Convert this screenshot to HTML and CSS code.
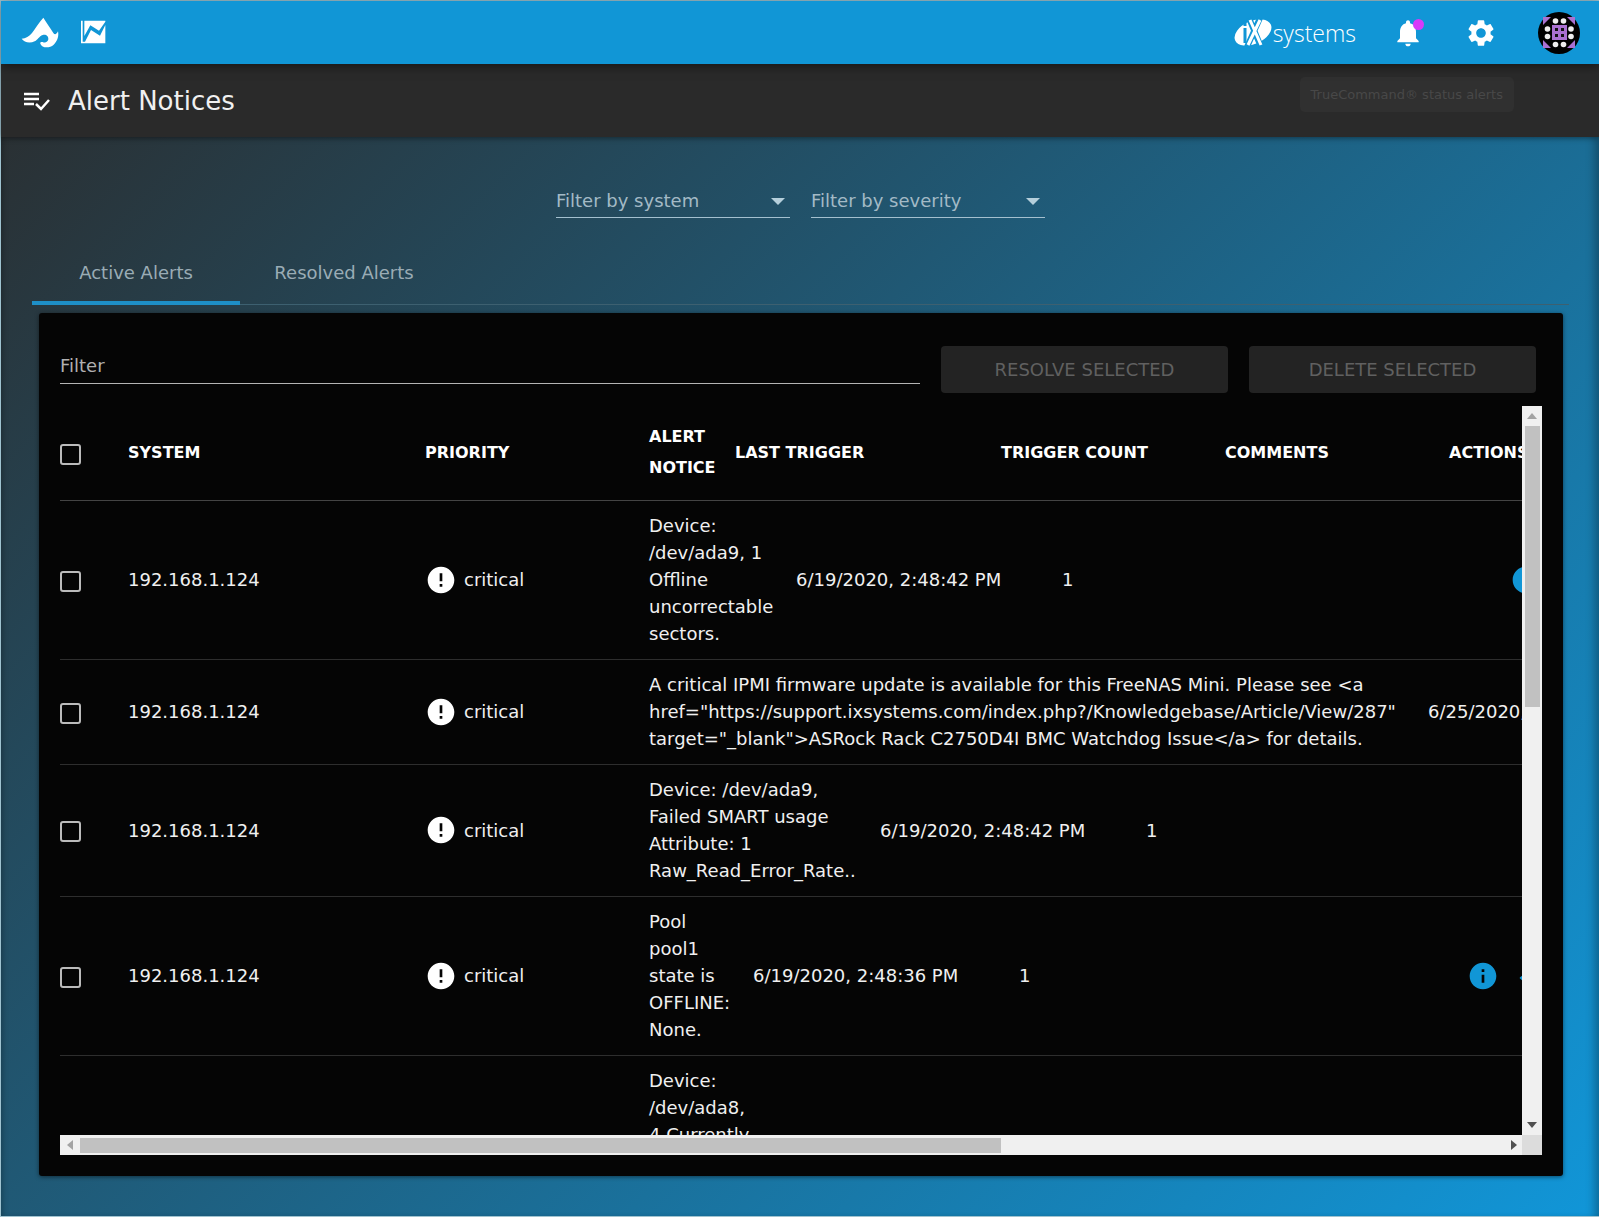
FILE: index.html
```html
<!DOCTYPE html>
<html lang="en">
<head>
<meta charset="utf-8">
<title>Alert Notices</title>
<link rel="stylesheet" href="styles.css">
</head>
<body>
<svg class="defs" aria-hidden="true">
  <symbol id="i-error" viewBox="0 0 24 24"><path d="M12 2C6.480 2 2 6.480 2 12s4.480 10 10 10 10-4.480 10-10S17.520 2 12 2zm1 15h-2v-2h2v2zm0-4h-2V7h2v6z"/></symbol>
  <symbol id="i-info" viewBox="0 0 24 24"><path d="M12 2C6.480 2 2 6.480 2 12s4.480 10 10 10 10-4.480 10-10S17.520 2 12 2zm1 15h-2v-6h2v6zm0-8h-2V7h2v2z"/></symbol>
  <symbol id="i-check" viewBox="0 0 24 24"><path d="M9 16.170L4.830 12l-1.420 1.410L9 19 21 7l-1.410-1.410z"/></symbol>
</svg>
<div class="app">
  <header class="topbar">
    <a class="brand" href="#" aria-label="Home">
      <svg width="38" height="32" viewBox="0 0 114 96"><path fill="#fff" d="M67 2 C54 17 43 34 33 48 C25 58 14 65 2 65 C9 76 26 80 41 73 C51 68 54 58 65 54 C75 51 83 58 82 67 C81 75 72 79 65 75 C59 74 57 76 58 80 C62 93 85 95 98 83 C110 72 114 57 111 43 C107 51 102 55 97 48 C89 34 77 18 67 2z"/></svg>
    </a>
    <a class="brand" href="#" aria-label="Dashboard">
      <svg width="25" height="26" viewBox="0 0 75 78"><path fill="#fff" d="M0 2h5v63h68v5H0zM10 2h63v3L54 32 28 16 10 48zM73 15v50H12l18-35 27 17z"/></svg>
    </a>
    <span class="spacer"></span>
    <a class="ix" href="#" aria-label="iXsystems">
      <svg width="38" height="32" viewBox="0 0 38 32">
        <ellipse cx="19" cy="15.500" rx="19.500" ry="11.500" transform="rotate(-24 19 15.500)" fill="#fff"/>
        <g fill="none" stroke="#1196d6" stroke-width="6"><path d="M15 1l12 29M26 1L13 30"/></g>
        <g fill="none" stroke="#fff" stroke-width="3"><path d="M16 3l11 25M26 3L14 28"/></g>
        <path fill="none" stroke="#1196d6" stroke-width="3" d="M11 11v15M11 6v3"/>
      </svg>
      <span>systems</span>
    </a>
    <button class="icon bell" aria-label="Alerts">
      <svg width="32" height="32" viewBox="0 0 24 24"><path fill="#fff" d="M12 22c1.100 0 2-.9 2-2h-4c0 1.100.9 2 2 2zm6-6v-5c0-3.070-1.640-5.640-4.500-6.320V4c0-.83-.67-1.500-1.500-1.500s-1.500.67-1.500 1.500v.68C7.630 5.360 6 7.920 6 11v5l-2 2v1h16v-1l-2-2z"/></svg>
      <span class="dot"></span>
    </button>
    <button class="icon" aria-label="Settings">
      <svg width="32" height="32" viewBox="0 0 24 24"><path fill="#fff" d="M19.140 12.940c.04-.3.06-.61.06-.94 0-.32-.02-.64-.07-.94l2.030-1.580c.18-.14.23-.41.12-.61l-1.920-3.320c-.12-.22-.37-.29-.59-.22l-2.390.96c-.5-.38-1.030-.7-1.620-.94L14.400 2.810c-.04-.24-.24-.41-.48-.41h-3.840c-.24 0-.43.17-.47.41L9.250 5.350c-.59.24-1.130.57-1.620.94L5.240 5.330c-.22-.08-.47 0-.59.22L2.740 8.870c-.12.21-.08.47.12.61l2.030 1.580c-.05.3-.09.63-.09.94s.02.64.07.94l-2.030 1.580c-.18.14-.23.41-.12.61l1.920 3.320c.12.22.37.29.59.22l2.390-.96c.5.38 1.030.7 1.620.94l.36 2.540c.05.24.24.41.48.41h3.840c.24 0 .44-.17.47-.41l.36-2.540c.59-.24 1.130-.56 1.620-.94l2.390.96c.22.08.47 0 .59-.22l1.920-3.320c.12-.22.07-.47-.12-.61l-2.010-1.580zM12 15.600c-1.980 0-3.600-1.620-3.600-3.600s1.620-3.600 3.600-3.600 3.600 1.620 3.600 3.600-1.620 3.600-3.600 3.600z"/></svg>
    </button>
    <button class="icon avatar" aria-label="Account">
      <svg width="42" height="42" viewBox="0 0 42 42"><circle cx="21" cy="21" r="21" fill="#000"/><g fill="#a970d0"><path d="M14 13h15v15H14zM5 5h8l-8 8zM37 5h-8l8 8zM5 36v-8l8 8zM37 36v-8l-8 8z"/></g><path fill="#111" d="M17 16h3v3h-3zM23 16h3v3h-3zM17 22h3v3h-3zM23 22h3v3h-3z"/><g fill="#eee"><circle cx="17.500" cy="9" r="2.800"/><circle cx="25.500" cy="9" r="2.800"/><circle cx="17.500" cy="32.500" r="2.800"/><circle cx="25.500" cy="32.500" r="2.800"/><circle cx="9.500" cy="17" r="2.800"/><circle cx="9.500" cy="24.500" r="2.800"/><circle cx="33" cy="17" r="2.800"/><circle cx="33" cy="24.500" r="2.800"/></g></svg>
    </button>
  </header>
  <div class="titlebar">
    <svg width="26" height="20" viewBox="0 0 26 20"><g fill="none" stroke="#fff" stroke-width="2.500"><path d="M0 3h15M0 8h15M0 13h10"/><path d="M12 13l5 5 8-9"/></g></svg>
    <h1>Alert Notices</h1>
    <div class="tooltip" role="tooltip">TrueCommand® status alerts</div>
  </div>
  <main class="content">
    <div class="selects">
      <div class="select"><select aria-label="Filter by system"><option>Filter by system</option></select></div>
      <div class="select"><select aria-label="Filter by severity"><option>Filter by severity</option></select></div>
    </div>
    <div class="tabs" role="tablist">
      <button class="tab tab-active" role="tab" aria-selected="true">Active Alerts</button>
      <button class="tab" role="tab" aria-selected="false">Resolved Alerts</button>
    </div>
    <section class="card">
      <div class="toolbar">
        <input class="filter" type="text" placeholder="Filter" aria-label="Filter">
        <button class="action" disabled>RESOLVE SELECTED</button>
        <button class="action" disabled>DELETE SELECTED</button>
      </div>
      <div class="scroller">
        <div class="viewport">
          <table>
            <thead>
              <tr>
                <th class="c-check"><input type="checkbox" aria-label="Select all"></th>
                <th class="c-system">SYSTEM</th>
                <th class="c-priority">PRIORITY</th>
                <th class="c-notice" style="width: 86px">ALERT NOTICE</th>
                <th class="c-last">LAST TRIGGER</th>
                <th class="c-count">TRIGGER COUNT</th>
                <th class="c-comments">COMMENTS</th>
                <th class="c-actions">ACTIONS</th>
              </tr>
            </thead>
            <tbody>
              <tr>
                <td class="c-check"><input type="checkbox" aria-label="Select alert"></td>
                <td class="c-system">192.168.1.124</td>
                <td class="c-priority"><svg><use href="#i-error"/></svg>critical</td>
                <td class="c-notice" style="width: 147px">Device: /dev/ada9, 1 Offline uncorrectable sectors.</td>
                <td class="c-last">6/19/2020, 2:48:42 PM</td>
                <td class="c-count">1</td>
                <td class="c-comments"></td>
                <td class="c-actions"><svg><use href="#i-info"/></svg><svg><use href="#i-check"/></svg></td>
              </tr>
              <tr>
                <td class="c-check"><input type="checkbox" aria-label="Select alert"></td>
                <td class="c-system">192.168.1.124</td>
                <td class="c-priority"><svg><use href="#i-error"/></svg>critical</td>
                <td class="c-notice" style="width: 779px">A critical IPMI firmware update is available for this FreeNAS Mini. Please see &lt;a href="https://support.ixsystems.com/index.php?/Knowledgebase/Article/View/287" target="_blank"&gt;ASRock Rack C2750D4I BMC Watchdog Issue&lt;/a&gt; for details.</td>
                <td class="c-last">6/25/2020, 2:48:42 PM</td>
                <td class="c-count">1</td>
                <td class="c-comments"></td>
                <td class="c-actions"><svg><use href="#i-info"/></svg><svg><use href="#i-check"/></svg></td>
              </tr>
              <tr>
                <td class="c-check"><input type="checkbox" aria-label="Select alert"></td>
                <td class="c-system">192.168.1.124</td>
                <td class="c-priority"><svg><use href="#i-error"/></svg>critical</td>
                <td class="c-notice" style="width: 231px">Device: /dev/ada9, Failed SMART usage Attribute: 1 Raw_Read_Error_Rate..</td>
                <td class="c-last">6/19/2020, 2:48:42 PM</td>
                <td class="c-count">1</td>
                <td class="c-comments"></td>
                <td class="c-actions"><svg><use href="#i-info"/></svg><svg><use href="#i-check"/></svg></td>
              </tr>
              <tr>
                <td class="c-check"><input type="checkbox" aria-label="Select alert"></td>
                <td class="c-system">192.168.1.124</td>
                <td class="c-priority"><svg><use href="#i-error"/></svg>critical</td>
                <td class="c-notice" style="width: 104px">Pool pool1 state is OFFLINE: None.</td>
                <td class="c-last">6/19/2020, 2:48:36 PM</td>
                <td class="c-count">1</td>
                <td class="c-comments"></td>
                <td class="c-actions"><svg><use href="#i-info"/></svg><svg><use href="#i-check"/></svg></td>
              </tr>
              <tr>
                <td class="c-check"></td>
                <td class="c-system"></td>
                <td class="c-priority"></td>
                <td class="c-notice" style="width: 124px">Device: /dev/ada8, 4&nbsp;Currently</td>
              </tr>
            </tbody>
          </table>
        </div>
        <div class="bar bar-v"><i class="arrow up"></i><i class="thumb"></i><i class="arrow down"></i></div>
        <div class="bar bar-h"><i class="arrow left"></i><i class="thumb"></i><i class="arrow right"></i></div>
        <div class="corner"></div>
      </div>
    </section>
  </main>
</div>
</body>
</html>
```
FILE: styles.css
```css
* { box-sizing: border-box; }
body {
  margin: 0;
  font: 18px/27px "DejaVu Sans", Verdana, sans-serif;
  color: #fff;
}
button, input, select { font: inherit; color: inherit; }
button { border: 0; padding: 0; background: none; }
svg { display: block; flex: none; }
.defs { position: absolute; width: 0; height: 0; }

.app {
  display: flex;
  flex-direction: column;
  height: 100vh;
  border: 1px solid #9fc3d0;
  border-right: 0;
  background: linear-gradient(135deg, #2b2b2b, #1196d8);
}

/* Top bar */
.topbar {
  display: flex;
  align-items: center;
  flex: none;
  height: 63px;
  padding: 0 19px 0 20px;
  background: #1196d6;
  position: relative;
  z-index: 2;
  box-shadow: 0 2px 10px rgba(0, 0, 0, .5);
}
.brand { margin-right: 22px; }
.spacer { flex: 1; }
.ix {
  display: flex;
  align-items: center;
  gap: 1px;
  margin-right: 36px;
  color: #fff;
  font: 300 23px/32px "Open Sans", sans-serif;
  text-decoration: none;
}
.icon { position: relative; display: flex; margin-right: 41px; }
.avatar { margin: 0; }
.dot {
  position: absolute;
  top: 2px;
  right: 0;
  width: 11px;
  height: 11px;
  border-radius: 50%;
  background: #d63af9;
}

/* Title bar */
.titlebar {
  display: flex;
  align-items: center;
  flex: none;
  gap: 18px;
  height: 73px;
  padding: 0 85px 0 23px;
  background: #2a2a2a;
  position: relative;
  z-index: 1;
  box-shadow: 0 1px 6px rgba(0, 0, 0, .4);
}
h1 { margin: 0; font-size: 26px; font-weight: 400; line-height: 36px; color: #f0f0f0; }
.tooltip {
  margin: 0 0 12px auto;
  padding: 0 11px;
  border-radius: 5px;
  background: #303030;
  color: #484848;
  font-size: 13px;
  line-height: 35px;
}

/* Content */
.content {
  display: flex;
  flex-direction: column;
  flex: 1;
  min-height: 0;
  padding: 42px 30px 40px 31px;
  box-shadow: inset -10px 0 10px -6px rgba(0, 0, 0, .3), inset 5px 0 6px -4px rgba(0, 0, 0, .3);
}
.selects { display: flex; justify-content: center; gap: 21px; }
.select {
  position: relative;
  width: 234px;
  border-bottom: 1px solid #a4c0cf;
  color: #a3bac6;
}
.select::after {
  content: "";
  position: absolute;
  top: 19px;
  right: 5px;
  border: 7px solid transparent;
  border-top-color: #b5cfdb;
  border-bottom: 0;
}
.select select {
  display: block;
  width: 100%;
  height: 38px;
  padding: 4px 0 0;
  border: 0;
  background: none;
  appearance: none;
}
.tabs {
  display: flex;
  flex: none;
  height: 65px;
  margin-top: 22px;
  border-bottom: 1px solid #3d6070;
}
.tab { width: 208px; height: 65px; padding-top: 3px; color: #9aacb5; border-bottom: 4px solid transparent; }
.tab-active { border-color: #1e8fc7; }
.card {
  display: flex;
  flex-direction: column;
  flex: 1;
  min-height: 0;
  margin: 8px 6px 0 7px;
  padding: 33px 21px 21px;
  border-radius: 3px;
  background: #050505;
  box-shadow: 0 1px 4px rgba(0, 0, 0, .5);
}
.toolbar { display: flex; flex: none; gap: 21px; padding-right: 6px; }
.filter {
  flex: 1;
  height: 38px;
  padding: 2px 0 0;
  border: 0;
  border-bottom: 1px solid #b4b4b4;
  background: none;
}
.filter::placeholder { color: #b0b0b0; opacity: 1; }
.action { width: 287px; height: 47px; border-radius: 4px; background: #232323; color: #606060; }

/* Scrolling table */
.scroller {
  display: grid;
  grid-template: minmax(0, 1fr) 20px / minmax(0, 1fr) 20px;
  flex: 1;
  min-height: 0;
  margin-top: 13px;
}
.viewport { overflow: hidden; }
table, thead, tbody { display: block; }
tr { display: flex; width: max-content; min-width: 100%; border-bottom: 1px solid #2e2e2e; }
thead tr { height: 95px; border-color: #444; }
th, td { display: flex; align-items: center; flex: none; padding: 0; text-align: left; }
th { padding-bottom: 2px; font-size: 16px; line-height: 31px; }
td { padding: 11px 0 12px; color: #f0f0f0; }
.c-check { width: 68px; padding-top: 2px; padding-bottom: 0; }
.c-system { width: 297px; }
.c-priority, .c-count, .c-comments { width: 224px; }
.c-priority { gap: 7px; }
.c-notice { padding-right: 20px; }
.c-last { width: 266px; }
.c-actions { width: 224px; gap: 16px; }
td svg { width: 32px; height: 32px; fill: #fff; }
.c-actions svg { fill: #1196d6; }
input[type="checkbox"] {
  width: 21px;
  height: 21px;
  margin: 0;
  border: 2px solid #bbb;
  border-radius: 3px;
  appearance: none;
}

/* Scroll bars */
.bar { display: flex; align-items: center; background: #f0f0f0; }
.bar-v { flex-direction: column; }
.bar-h { grid-row: 2; }
.corner { background: #dcdcdc; }
.thumb { background: #c1c1c1; }
.bar-v .thumb { width: 15px; height: 38.5%; }
.bar-h .thumb { height: 15px; width: 63%; }
.arrow { flex: none; border: 5px solid transparent; }
.up { margin: 7px 0; border-top: 0; border-bottom: 6px solid #a3a3a3; }
.down { margin: auto 0 7px; border-bottom: 0; border-top: 6px solid #505050; }
.left { margin: 0 7px; border-left: 0; border-right: 6px solid #a3a3a3; }
.right { margin: 0 5px 0 auto; border-right: 0; border-left: 6px solid #505050; }
```
